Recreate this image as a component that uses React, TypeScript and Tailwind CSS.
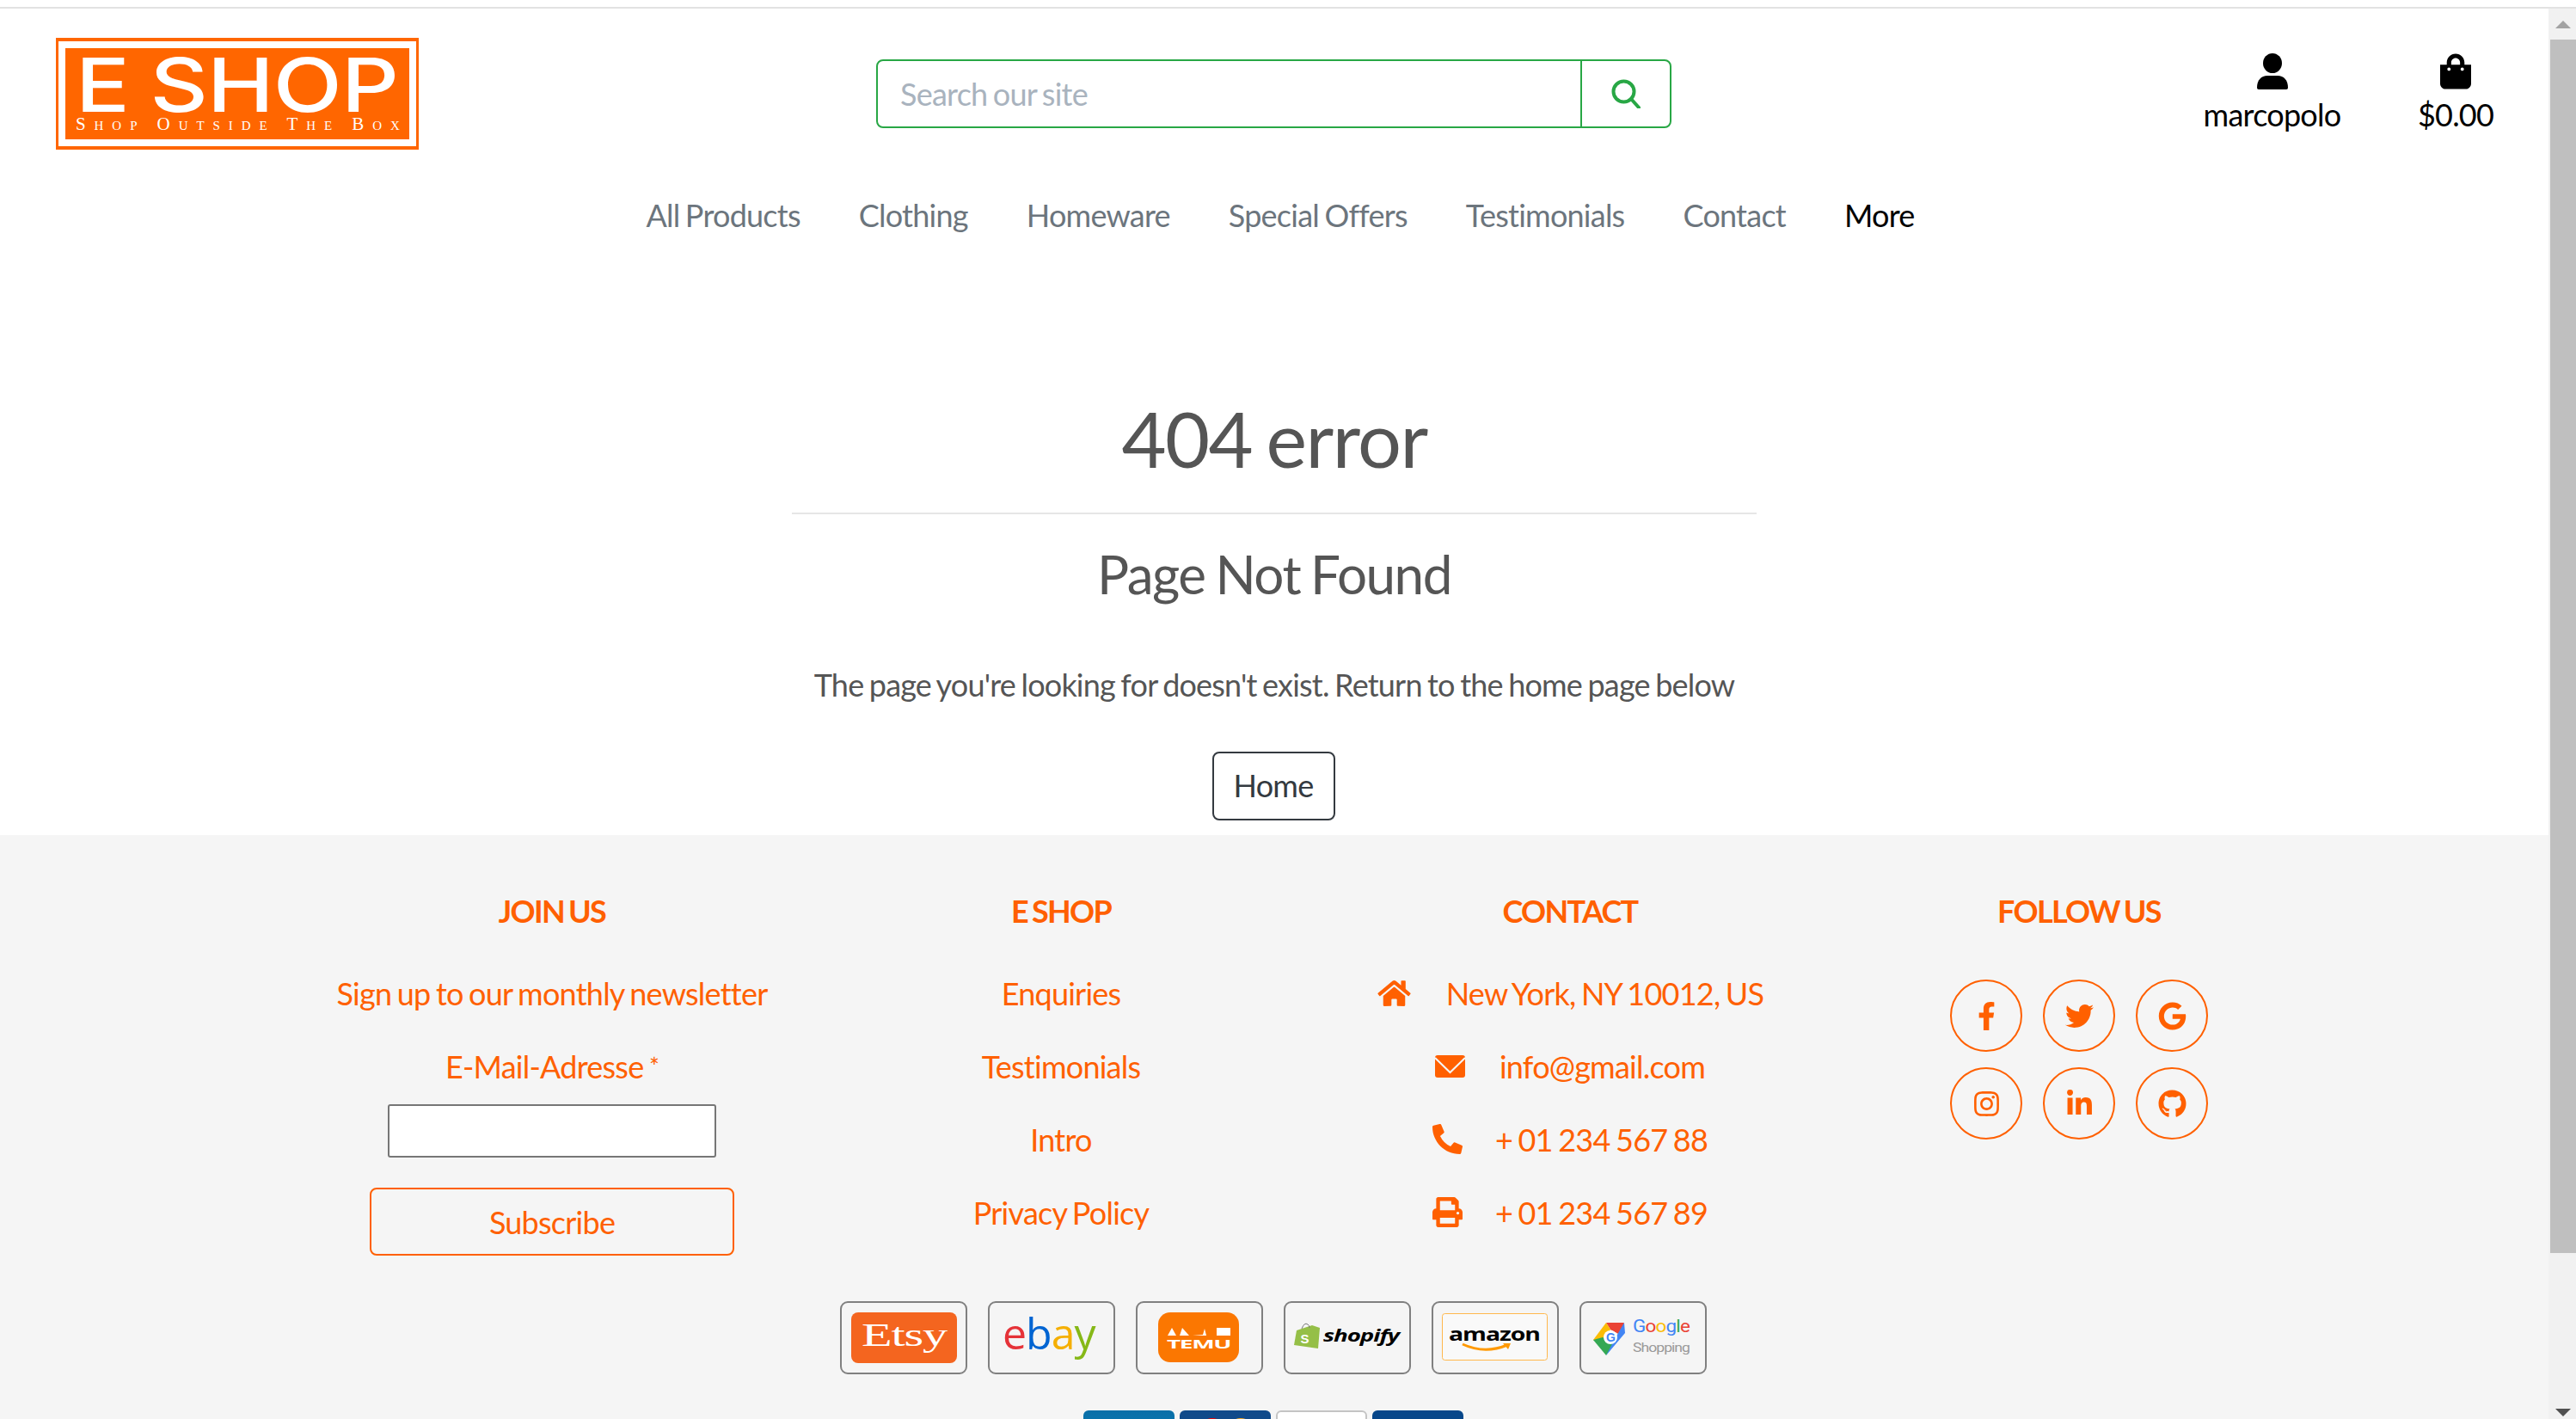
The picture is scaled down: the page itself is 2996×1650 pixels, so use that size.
import { FaShoppingBag, FaHome, FaPhoneAlt, FaPrint, FaFacebookF, FaTwitter, FaGoogle, FaInstagram, FaLinkedinIn, FaGithub } from "react-icons/fa";

const navLinks = ["All Products", "Clothing", "Homeware", "Special Offers", "Testimonials", "Contact"];
const shopLinks = ["Enquiries", "Testimonials", "Intro", "Privacy Policy"];

function Logo() {
  return (
    <svg width="422" height="130" viewBox="0 0 422 130" className="block shrink-0">
      <rect width="422" height="130" fill="#ff6600" />
      <rect x="3" y="4" width="416" height="122" fill="#fff" />
      <rect x="11" y="12" width="400" height="106" fill="#ff6600" />
      <text x="23" y="86" fill="#fff" fontFamily="'Inter', sans-serif" fontWeight="500" fontSize="86" textLength="375" lengthAdjust="spacingAndGlyphs">E SHOP</text>
      <text x="23" y="107" fill="#fff" fontFamily="'Liberation Serif', serif" fontSize="21" fontVariant="small-caps" textLength="376" lengthAdjust="spacing">Shop Outside The Box</text>
    </svg>
  );
}

function SearchGlyph() {
  return (
    <svg width="34" height="34" viewBox="0 0 34 34" fill="none" stroke="#28a745" strokeWidth="4">
      <circle cx="14.5" cy="14.5" r="12" />
      <path d="M23 23 L32 33" strokeLinecap="round" />
    </svg>
  );
}

function PersonGlyph() {
  return (
    <svg width="36" height="42" viewBox="0 0 36 42" fill="#000">
      <ellipse cx="18" cy="11.5" rx="11" ry="11.5" />
      <path d="M0 40 C0 31 5 26 12 26 H24 C31 26 36 31 36 40 Q36 42 34 42 H2 Q0 42 0 40 Z" />
    </svg>
  );
}

function EnvelopeGlyph() {
  return (
    <svg width="35" height="26" viewBox="0 0 35 26">
      <rect width="35" height="26" rx="3" fill="#ff6000" />
      <path d="M0 3 L17.5 20 L35 3" fill="none" stroke="#f5f5f5" strokeWidth="2" />
    </svg>
  );
}

function Badge({ children }: { children: React.ReactNode }) {
  return (
    <div className="h-[85px] w-[148px] rounded-[9px] border-2 border-[#808080]">
      <svg width="144" height="81" viewBox="2 2 144 81" className="block">
        {children}
      </svg>
    </div>
  );
}

function MarketBadges() {
  return (
    <div className="mt-[53px] flex justify-center gap-[24px] pr-[2px]">
      <Badge>
        <rect x="13" y="13" width="123" height="59" rx="8" fill="#f4651f" />
        <text x="25" y="52" fill="#fff" fontFamily="'Liberation Serif', serif" fontSize="38" textLength="99" lengthAdjust="spacingAndGlyphs">Etsy</text>
      </Badge>
      <Badge>
        <text x="17" y="56" fontFamily="'Open Sans', sans-serif" fontSize="50" letterSpacing="-1">
          <tspan fill="#e53238">e</tspan>
          <tspan fill="#0064d2">b</tspan>
          <tspan fill="#f5af02">a</tspan>
          <tspan fill="#86b817">y</tspan>
        </text>
      </Badge>
      <Badge>
        <rect x="26" y="13" width="94" height="58" rx="14" fill="#fb7701" />
        <path d="M37 40 L42 31 L47 40 Z M51 40 L54 31 L62 40 Z M66 40 L78 39 L80 32 L82 40 Z M94 31 H110 V40 H94 Z" fill="#fff" />
        <text x="36" y="55" fill="#fff" fontFamily="'Open Sans', sans-serif" fontWeight="700" fontSize="15" textLength="74" lengthAdjust="spacingAndGlyphs">TEMU</text>
      </Badge>
      <Badge>
        <path d="M15 34 L33 28 L42 31 L40 55 L12 51 Z" fill="#95bf47" />
        <path d="M21 32 Q24 24 28 27 Q30 28 30 31" fill="none" stroke="#777" strokeWidth="1" />
        <text x="24" y="49" fill="#fff" textAnchor="middle" fontFamily="'Liberation Sans', sans-serif" fontWeight="700" fontSize="15">S</text>
        <text x="46" y="47" fill="#000" fontFamily="'Open Sans', sans-serif" fontWeight="700" fontStyle="italic" fontSize="20" textLength="88" lengthAdjust="spacingAndGlyphs">shopify</text>
      </Badge>
      <Badge>
        <rect x="12.5" y="14.5" width="122" height="54" rx="3" fill="#f9f9f9" stroke="#ffb84d" strokeWidth="1" />
        <text x="20" y="46" fill="#000" fontFamily="'Open Sans', sans-serif" fontWeight="700" fontSize="21" textLength="106" lengthAdjust="spacingAndGlyphs">amazon</text>
        <path d="M36 50 Q62 62 88 51" fill="none" stroke="#ff9900" strokeWidth="3" />
        <path d="M83 49 L92 49 L89 56 Z" fill="#ff9900" />
      </Badge>
      <Badge>
        <path d="M31 25 L52 25 L47 39 L36 33 Z" fill="#ea4335" />
        <path d="M31 25 L16 45 L27 52 L36 33 Z" fill="#fbbc05" />
        <path d="M16 45 L31 63 L41 49 L27 42 Z" fill="#34a853" />
        <path d="M52 25 L53 37 L31 63 L41 44 Z" fill="#4285f4" />
        <circle cx="36" cy="42" r="8" fill="#fff" />
        <text x="36" y="47" textAnchor="middle" fill="#4285f4" fontFamily="'Liberation Sans', sans-serif" fontWeight="700" fontSize="14">G</text>
        <text x="62" y="36" fontFamily="'Roboto', sans-serif" fontSize="21" textLength="66" lengthAdjust="spacingAndGlyphs">
          <tspan fill="#4285f4">G</tspan>
          <tspan fill="#ea4335">o</tspan>
          <tspan fill="#fbbc05">o</tspan>
          <tspan fill="#4285f4">g</tspan>
          <tspan fill="#34a853">l</tspan>
          <tspan fill="#ea4335">e</tspan>
        </text>
        <text x="62" y="59" fill="#9a9a9a" fontFamily="'Roboto', sans-serif" fontSize="14" textLength="66" lengthAdjust="spacingAndGlyphs">Shopping</text>
      </Badge>
    </div>
  );
}

function PaymentCards() {
  return (
    <div className="mt-[42px] flex justify-center gap-[6px] pr-[2px]">
      <div className="h-[66px] w-[106px] rounded-[6px] bg-gradient-to-b from-[#0a6fa8] to-[#0586bd]" />
      <div className="relative h-[66px] w-[106px] overflow-hidden rounded-[6px] bg-[#104a8a]">
        <div className="absolute top-[9px] left-[21px] h-[34px] w-[34px] rounded-full bg-[#f00000]" />
        <div className="absolute top-[9px] left-[54px] h-[34px] w-[34px] rounded-full bg-[#f7a823]" />
      </div>
      <div className="h-[66px] w-[106px] rounded-[6px] border-2 border-[#c4c4c4] bg-white" />
      <div className="h-[66px] w-[106px] rounded-[6px] bg-[#07478a]" />
    </div>
  );
}

function FooterRow({ children }: { children: React.ReactNode }) {
  return <div className="flex h-[85px] items-center justify-center">{children}</div>;
}

function ContactRow({ icon, text, gap }: { icon: React.ReactNode; text: string; gap: string }) {
  return (
    <FooterRow>
      <span className={`flex items-center ${gap}`}>
        {icon}
        <span>{text}</span>
      </span>
    </FooterRow>
  );
}

function Social({ children }: { children: React.ReactNode }) {
  return (
    <div className="flex h-[84px] w-[84px] items-center justify-center rounded-full border-2 border-[#ff6000]">
      {children}
    </div>
  );
}

export default function App() {
  return (
    <div className="h-[1650px] w-full overflow-hidden bg-white font-['Lato',sans-serif] text-[36px] tracking-[-0.76px] [word-spacing:-2px]">
      <div className="mt-[8px] border-t-2 border-[#e2e2e2]" />
      <div className="flex h-[1640px]">
        <main className="w-[2964px] shrink-0">
          {/* Header */}
          <header className="flex items-center pt-[34px] pl-[65px]">
            <Logo />
            <div className="ml-[532px] flex h-[80px] w-[925px] overflow-hidden rounded-[8px] border-2 border-[#28a745]">
              <span className="flex-1 pl-[26px] leading-[76px] text-[#a9b3be]">Search our site</span>
              <span className="flex w-[104px] items-center justify-center border-l-2 border-[#28a745]">
                <SearchGlyph />
              </span>
            </div>
            <div className="ml-[620px] flex w-[157px] flex-col items-center leading-[48px] text-black">
              <PersonGlyph />
              <span className="mt-[5px]">marcopolo</span>
            </div>
            <div className="ml-[93px] flex w-[84px] flex-col items-center leading-[48px] text-black">
              <FaShoppingBag className="h-[42px] w-[36px]" />
              <span className="mt-[5px]">$0.00</span>
            </div>
          </header>

          {/* Nav */}
          <nav className="mt-[49px] flex justify-center gap-[68px] pl-[14px] leading-[54px] text-[#6c757d]">
            {navLinks.map((l) => (
              <span key={l}>{l}</span>
            ))}
            <span className="text-black">More</span>
          </nav>

          {/* 404 */}
          <section className="flex h-[694px] flex-col items-center text-[#555]">
            <h1 className="mt-[182px] text-[90px] leading-[100px] tracking-[-1.6px] [word-spacing:-5px]">404 error</h1>
            <div className="mt-[37px] h-[2px] w-[1122px] bg-[#e6e6e6]" />
            <h2 className="mt-[33px] text-[62px] leading-[72px] tracking-[-1.5px] [word-spacing:-2.5px]">Page Not Found</h2>
            <p className="mt-[66px] leading-[54px] tracking-[-0.8px]">The page you're looking for doesn't exist. Return to the home page below</p>
            <button className="mt-[51px] mr-[2px] h-[80px] w-[143px] rounded-[8px] border-2 border-[#343a40] pb-[2px] text-[#343a40]">Home</button>
          </section>

          {/* Footer */}
          <footer className="bg-[#f5f5f5] pt-[65px] pb-[40px] text-[#ff6000]">
            <div className="grid w-[2368px] translate-x-[346px] grid-cols-4 text-center">
              <div>
                <h3 className="leading-[46px] font-bold tracking-[-1.7px]">JOIN US</h3>
                <div className="mt-[30px]">
                  <FooterRow>Sign up to our monthly newsletter</FooterRow>
                  <FooterRow>
                    <span>
                      E-Mail-Adresse <span className="align-[3px] text-[28px]">*</span>
                    </span>
                  </FooterRow>
                  <div className="mx-auto mt-[2px] h-[62px] w-[382px] rounded-[3px] border-2 border-[#767676] bg-white" />
                  <button className="mx-auto mt-[35px] block h-[79px] w-[424px] rounded-[8px] border-2 border-[#ff6000]">Subscribe</button>
                </div>
              </div>
              <div>
                <h3 className="leading-[46px] font-bold tracking-[-1.7px]">E SHOP</h3>
                <div className="mt-[30px]">
                  {shopLinks.map((l) => (
                    <FooterRow key={l}>{l}</FooterRow>
                  ))}
                </div>
              </div>
              <div>
                <h3 className="leading-[46px] font-bold tracking-[-1.7px]">CONTACT</h3>
                <div className="mt-[30px]">
                  <ContactRow icon={<FaHome className="h-[34px] w-[41px]" />} text="New York, NY 10012, US" gap="gap-[40px]" />
                  <ContactRow icon={<EnvelopeGlyph />} text="info@gmail.com" gap="gap-[40px]" />
                  <ContactRow icon={<FaPhoneAlt className="h-[35px] w-[35px]" />} text="+ 01 234 567 88" gap="gap-[38px]" />
                  <ContactRow icon={<FaPrint className="h-[35px] w-[35px]" />} text="+ 01 234 567 89" gap="gap-[38px]" />
                </div>
              </div>
              <div>
                <h3 className="leading-[46px] font-bold tracking-[-1.7px]">FOLLOW US</h3>
                <div className="mx-auto mt-[57px] grid w-[300px] grid-cols-3 gap-x-[24px] gap-y-[18px]">
                  <Social><FaFacebookF className="h-[33px] w-[33px]" /></Social>
                  <Social><FaTwitter className="h-[33px] w-[33px]" /></Social>
                  <Social><FaGoogle className="h-[33px] w-[33px]" /></Social>
                  <Social><FaInstagram className="h-[33px] w-[33px]" /></Social>
                  <Social><FaLinkedinIn className="h-[33px] w-[33px]" /></Social>
                  <Social><FaGithub className="h-[33px] w-[33px]" /></Social>
                </div>
              </div>
            </div>
            <MarketBadges />
            <PaymentCards />
          </footer>
        </main>

        {/* Scrollbar */}
        <aside className="flex w-[32px] shrink-0 flex-col bg-[#f1f1f1]">
          <div className="flex h-[36px] items-center justify-center pl-[2px]">
            <div className="h-0 w-0 border-x-[9px] border-b-[9px] border-x-transparent border-b-[#a3a3a3]" />
          </div>
          <div className="ml-[2px] h-[1411px] bg-[#bfbfbf]" />
          <div className="flex flex-1 items-end justify-center pb-[3px] pl-[2px]">
            <div className="h-0 w-0 border-x-[9px] border-t-[9px] border-x-transparent border-t-[#505050]" />
          </div>
        </aside>
      </div>
    </div>
  );
}
